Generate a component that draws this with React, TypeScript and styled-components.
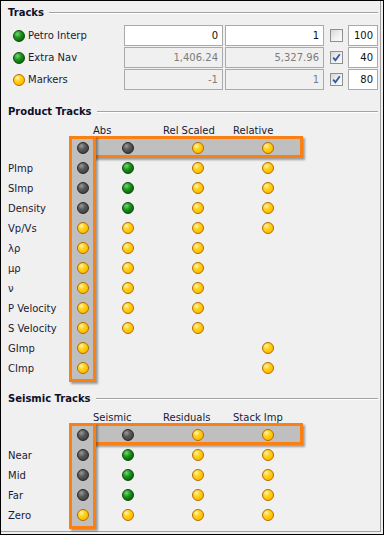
import React from "react";
import styled, { createGlobalStyle, css } from "styled-components";

type Tone = "green" | "yellow" | "gray";

type TrackRow = {
  name: string;
  tone: Tone;
  min: string;
  max: string;
  checked: boolean;
  width: string;
  live: boolean;
};

type DotRow = { label: string; cells: (Tone | null)[] };

const tracks: TrackRow[] = [
  { name: "Petro Interp", tone: "green", min: "0", max: "1", checked: false, width: "100", live: true },
  { name: "Extra Nav", tone: "green", min: "1,406.24", max: "5,327.96", checked: true, width: "40", live: false },
  { name: "Markers", tone: "yellow", min: "-1", max: "1", checked: true, width: "80", live: false },
];

const Y: Tone = "yellow";
const G: Tone = "green";
const D: Tone = "gray";

const productRows: DotRow[] = [
  { label: "PImp", cells: [D, G, Y, Y] },
  { label: "SImp", cells: [D, G, Y, Y] },
  { label: "Density", cells: [D, G, Y, Y] },
  { label: "Vp/Vs", cells: [Y, Y, Y, Y] },
  { label: "λρ", cells: [Y, Y, Y, null] },
  { label: "μρ", cells: [Y, Y, Y, null] },
  { label: "ν", cells: [Y, Y, Y, null] },
  { label: "P Velocity", cells: [Y, Y, Y, null] },
  { label: "S Velocity", cells: [Y, Y, Y, null] },
  { label: "GImp", cells: [Y, null, null, Y] },
  { label: "CImp", cells: [Y, null, null, Y] },
];

const seismicRows: DotRow[] = [
  { label: "Near", cells: [D, G, Y, Y] },
  { label: "Mid", cells: [D, G, Y, Y] },
  { label: "Far", cells: [D, G, Y, Y] },
  { label: "Zero", cells: [Y, Y, Y, Y] },
];

const GlobalStyle = createGlobalStyle`
  html, body {
    margin: 0;
    padding: 0;
    background: #ffffff;
  }
  body {
    font-family: "DejaVu Sans", Verdana, sans-serif;
    font-size: 10px;
    color: #1a1a33;
  }
  * {
    box-sizing: border-box;
  }
`;

const tones = {
  green: css`
    border-color: #0b4a0b;
    background: radial-gradient(circle at 35% 30%, #74d874 0, #1f961f 38%, #0b6e0b 72%, #075607 100%);
  `,
  yellow: css`
    border-color: #b56a00;
    background: radial-gradient(circle at 35% 30%, #fff6b0 0, #ffd21a 35%, #ffbf00 70%, #f0a000 100%);
  `,
  gray: css`
    border-color: #262626;
    background: radial-gradient(circle at 35% 30%, #9a9a9a 0, #5a5a5a 38%, #444444 72%, #333333 100%);
  `,
};

const Frame = styled.div`
  width: 384px;
  height: 535px;
  border: 1px solid #000000;
  background: #f0f0f0;
`;

const Panel = styled.div`
  width: 380px;
  height: 531px;
  padding: 5px 2px 0 7px;
  border-right: 1px solid #a0a0a0;
  border-bottom: 1px solid #a0a0a0;
  display: flex;
  flex-direction: column;
`;

const SectionTitle = styled.div<{ $top: number }>`
  display: flex;
  align-items: center;
  gap: 5px;
  height: 14px;
  margin-top: ${(p) => p.$top}px;
  font-weight: bold;
  color: #0f0f2a;
  line-height: 14px;
`;

const Rule = styled.div`
  flex: 1;
  border-top: 1px solid #a3a3a3;
  border-bottom: 1px solid #ffffff;
`;

const TrackList = styled.div`
  margin-top: 5px;
  display: flex;
  flex-direction: column;
  gap: 1px;
`;

const TrackLine = styled.div`
  display: grid;
  grid-template-columns: 1fr 99px 99px 20px 30px;
  column-gap: 2px;
  height: 21px;
  align-items: center;
`;

const TrackName = styled.div`
  display: flex;
  align-items: center;
  gap: 3px;
  padding-left: 5px;
  color: #1a1a33;
`;

const Field = styled.input<{ $live: boolean }>`
  width: 100%;
  height: 21px;
  border: 1px solid #aaaaaa;
  background: ${(p) => (p.$live ? "#ffffff" : "#f0f0f0")};
  color: ${(p) => (p.$live ? "#111111" : "#7c7c7c")};
  font: inherit;
  text-align: right;
  padding: 0 4px 0 2px;
  outline: none;
`;

const CheckBox = styled.span`
  width: 13px;
  height: 13px;
  margin-left: 4px;
  border: 1px solid #8e8f8f;
  background: linear-gradient(135deg, #d6d6d6 0%, #f0f0f0 55%, #fbfbfb 100%);
  display: flex;
  align-items: center;
  justify-content: center;
`;

const Dot = styled.span<{ $tone: Tone }>`
  display: block;
  width: 12px;
  height: 12px;
  border-radius: 50%;
  border: 1px solid;
  ${(p) => tones[p.$tone]}
`;

const DotGrid = styled.div<{ $rows: number }>`
  margin-top: 5px;
  display: grid;
  grid-template-columns: 65px 20px 70px 70px 70px;
  grid-template-rows: 14px repeat(${(p) => p.$rows}, 20px);
`;

const Highlight = styled.div<{ $col: string; $row: string; $margin: string }>`
  grid-column: ${(p) => p.$col};
  grid-row: ${(p) => p.$row};
  margin: ${(p) => p.$margin};
  border: 3px solid #fb8013;
  background: #bfbfbf;
  box-shadow: 2px 2px 2px rgba(0, 0, 0, 0.35);
`;

const ColHead = styled.div<{ $col: number }>`
  grid-row: 1;
  grid-column: ${(p) => p.$col};
  align-self: center;
  line-height: 14px;
  color: #1a1a33;
`;

const RowLabel = styled.div<{ $row: number }>`
  grid-row: ${(p) => p.$row};
  grid-column: 1;
  align-self: center;
  color: #1a1a33;
`;

const Cell = styled.div<{ $row: number; $col: number }>`
  grid-row: ${(p) => p.$row};
  grid-column: ${(p) => p.$col};
  display: flex;
  align-items: center;
  justify-content: center;
`;

const Check = () => (
  <svg width="9" height="9" viewBox="0 0 9 9">
    <path d="M1.2 4.6 L3.4 7.2 L7.8 1.2" fill="none" stroke="#3556a6" strokeWidth="1.8" />
  </svg>
);

const TrackTable = () => (
  <TrackList>
    {tracks.map((t) => (
      <TrackLine key={t.name}>
        <TrackName>
          <Dot $tone={t.tone} />
          {t.name}
        </TrackName>
        <Field $live={t.live} value={t.min} readOnly />
        <Field $live={t.live} value={t.max} readOnly />
        <CheckBox>{t.checked && <Check />}</CheckBox>
        <Field $live value={t.width} readOnly />
      </TrackLine>
    ))}
  </TrackList>
);

const DotTable = ({ headers, top, rows }: { headers: string[]; top: Tone[]; rows: DotRow[] }) => (
  <DotGrid $rows={rows.length + 1}>
    <Highlight $col="2 / 6" $row="2" $margin="-2px 0 0 -4px" />
    <Highlight $col="2" $row="2 / -1" $margin="-2px -3px -4px -4px" />
    {headers.map((h, i) => (
      <ColHead key={h} $col={i + 3}>
        {h}
      </ColHead>
    ))}
    {top.map((tone, i) => (
      <Cell key={i} $row={2} $col={i + 2}>
        <Dot $tone={tone} />
      </Cell>
    ))}
    {rows.map((r, ri) => (
      <React.Fragment key={r.label}>
        <RowLabel $row={ri + 3}>{r.label}</RowLabel>
        {r.cells.map(
          (tone, ci) =>
            tone && (
              <Cell key={ci} $row={ri + 3} $col={ci + 2}>
                <Dot $tone={tone} />
              </Cell>
            )
        )}
      </React.Fragment>
    ))}
  </DotGrid>
);

export default function App() {
  return (
    <>
      <GlobalStyle />
      <Frame>
        <Panel>
          <SectionTitle $top={0}>
            Tracks
            <Rule />
          </SectionTitle>
          <TrackTable />

          <SectionTitle $top={15}>
            Product Tracks
            <Rule />
          </SectionTitle>
          <DotTable headers={["Abs", "Rel Scaled", "Relative"]} top={[D, D, Y, Y]} rows={productRows} />

          <SectionTitle $top={14}>
            Seismic Tracks
            <Rule />
          </SectionTitle>
          <DotTable headers={["Seismic", "Residuals", "Stack Imp"]} top={[D, D, Y, Y]} rows={seismicRows} />
        </Panel>
      </Frame>
    </>
  );
}
